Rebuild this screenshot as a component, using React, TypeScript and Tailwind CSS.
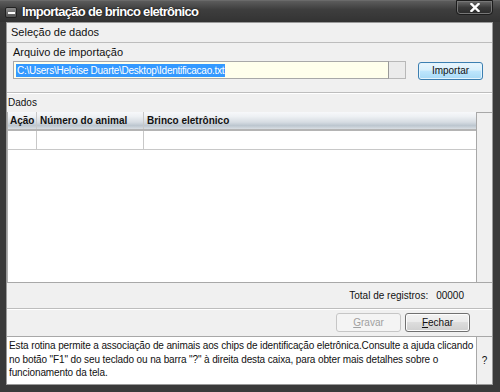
import React from 'react';

const font = "font-['Liberation_Sans',Arial,sans-serif]";

const App: React.FC = () => {
  return (
    <div className={`w-[500px] h-[392px] flex flex-col bg-[#3a3a3a] text-[11px] text-[#111] ${font}`}>
      {/* Title bar */}
      <div className="h-[22px] flex items-start relative bg-[linear-gradient(to_bottom,#5c5c5c_0%,#3e3e3e_40%,#333_100%)] border-t border-[#6a6a6a]">
        <div className="mt-[6px] ml-[5px] w-[12px] h-[11px] rounded-[2px] bg-[linear-gradient(to_bottom,#8a8a8a,#555)] border border-[#222] flex items-center justify-center">
          <div className="w-[7px] h-[2px] bg-white" />
        </div>
        <div className="ml-[5px] mt-[3px] text-white font-bold text-[13px] leading-[16px] tracking-[-0.7px] [text-shadow:0_0_2px_#000]">
          Importação de brinco eletrônico
        </div>
        <div className="absolute right-[7px] top-[-1px] w-[37px] h-[15px] rounded-b-[4px] border border-[#1c1c1c] bg-[linear-gradient(to_bottom,#6a6a6a,#3a3a3a_50%,#2a2a2a)] shadow-[inset_0_0_0_1px_#777] flex items-center justify-center">
          <svg width="10" height="9" viewBox="0 0 10 9">
            <path d="M1.5 1 L8.5 8 M8.5 1 L1.5 8" stroke="#fff" strokeWidth="2.4" strokeLinecap="square" />
          </svg>
        </div>
      </div>

      {/* Body */}
      <div className="flex-1 ml-[6px] mr-[7px] mb-[7px] bg-[#f0f0f0] flex flex-col border border-[#9a9a9a]">
        {/* Seleção de dados */}
        <div className="h-[20px] flex items-center pl-[4px] border-b border-[#bdbdbd]">Seleção de dados</div>
        <div className="h-[50px] border-b border-[#bdbdbd] pl-[6px] pt-[3px] shadow-[0_1px_0_#fff]">
          <div className="leading-[12px]">Arquivo de importação</div>
          <div className="flex items-start mt-[3px]">
            <div className="w-[376px] h-[18px] bg-[#ffffec] border border-[#a8a8a8] border-r-[#999] flex items-center pl-[2px]">
              <span className="bg-[#3399ff] text-white px-[1px] text-[10px] tracking-[-0.25px] leading-[13px]">C:\Users\Heloise Duarte\Desktop\Identificacao.txt</span>
            </div>
            <div className="w-[17px] h-[18px] bg-[#ebebeb] border border-l-0 border-[#b8b8b8]" />
            <button className="ml-[12px] mt-[1px] w-[65px] h-[18px] rounded-[3px] border border-[#3c7fb1] bg-[linear-gradient(to_bottom,#eaf6fd_0%,#d9f0fc_45%,#bee6fd_50%,#a7d9f5_100%)] shadow-[inset_0_0_0_1px_#e4f4fd] text-[10px] text-[#111] leading-none">
              Importar
            </button>
          </div>
        </div>

        {/* Dados */}
        <div className="h-[19px] flex items-center pl-[1px] text-[10px]">Dados</div>
        <div className="h-[171px] flex border-b border-[#a8a8a8]">
          <div className="flex-1 bg-white border-l border-[#b0b0b0] flex flex-col">
            <div className="h-[19px] flex font-bold text-[10px] border-b-2 border-[#b4b4b4] bg-[linear-gradient(to_bottom,#f7f8fa_0%,#eef1f4_25%,#d6dce2_60%,#bcc6cf_80%,#d9dee3_100%)]">
              <div className="w-[29px] pl-[2px] flex items-center border-r border-[#c8c8c8]">Ação</div>
              <div className="w-[107px] pl-[3px] flex items-center border-r border-[#c8c8c8]">Número do animal</div>
              <div className="flex-1 pl-[3px] flex items-center">Brinco eletrônico</div>
            </div>
            <div className="h-[19px] flex border-b border-[#c8c8c8]">
              <div className="w-[29px] border-r border-[#c8c8c8]" />
              <div className="w-[107px] border-r border-[#c8c8c8]" />
              <div className="flex-1" />
            </div>
          </div>
          <div className="w-[16px] bg-[#f0f0f0] border-l border-t border-[#a8a8a8]" />
        </div>

        {/* Total */}
        <div className="h-[26px] flex items-center justify-end pr-[28px] text-[10px] border-b border-[#bdbdbd] shadow-[0_1px_0_#fff]">
          <span>Total de registros:</span>
          <span className="ml-[8px]">00000</span>
        </div>

        {/* Buttons */}
        <div className="h-[27px] flex items-center justify-end pr-[22px] gap-[4px]">
          <button className="w-[65px] h-[19px] rounded-[3px] border border-[#c6c6c6] bg-[#f4f4f4] text-[#a0a0a0] text-[10px] leading-none">
            <span className="underline">G</span>ravar
          </button>
          <button className="w-[65px] h-[19px] rounded-[3px] border border-[#707070] bg-[linear-gradient(to_bottom,#f2f2f2_0%,#ebebeb_45%,#dddddd_50%,#cfcfcf_100%)] shadow-[inset_0_0_0_1px_#fcfcfc] text-[10px] text-[#111] leading-none">
            <span className="underline">F</span>echar
          </button>
        </div>

        {/* Help */}
        <div className="flex-1 flex border-t border-[#a8a8a8]">
          <div className="flex-1 bg-white border-r border-[#a8a8a8] pl-[2px] pt-[2px] text-[10px] leading-[13.5px] tracking-[-0.12px]">
            Esta rotina permite a associação de animais aos chips de identificação eletrônica.Consulte a ajuda clicando no botão "F1" do seu teclado ou na barra "?" à direita desta caixa, para obter mais detalhes sobre o funcionamento da tela.
          </div>
          <div className="w-[15px] flex items-center justify-center bg-[#f0f0f0] text-[10px]">?</div>
        </div>
      </div>
    </div>
  );
};

export default App;
